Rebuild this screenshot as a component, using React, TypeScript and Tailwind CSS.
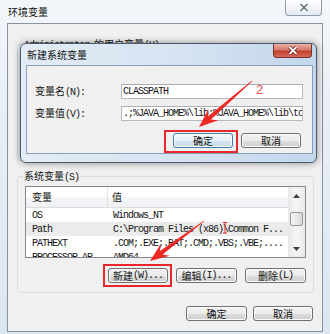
import React from 'react';

const mono = "font-['Liberation_Mono',monospace] tracking-[-1px]";

function M({ children }: { children: React.ReactNode }) {
  return <span className={mono}>{children}</span>;
}

function WinButton({
  children,
  primary = false,
  className = '',
}: {
  children: React.ReactNode;
  primary?: boolean;
  className?: string;
}) {
  return (
    <button
      className={`flex h-[15px] items-center justify-center rounded-[3px] border leading-none shadow-[inset_0_0_0_1px_#fbfbfb] ${
        primary
          ? 'border-[#3c7fb1] bg-[linear-gradient(#f1f7fb_0%,#e6f0f7_50%,#d6e5f0_51%,#c9dbe8_100%)]'
          : 'border-[#707070] bg-[linear-gradient(#f2f2f2_0%,#ebebeb_50%,#dddddd_51%,#cfcfcf_100%)]'
      } ${className}`}
    >
      {children}
    </button>
  );
}

// polygon for the red annotation arrows: thin tail, widening shaft, swept head
function arrow(tx: number, ty: number, px: number, py: number, h = 19, hw = 7.5) {
  const len = Math.hypot(px - tx, py - ty);
  const ux = (px - tx) / len;
  const uy = (py - ty) / len;
  const nx = -uy;
  const ny = ux;
  const bx = px - ux * h;
  const by = py - uy * h;
  const cx = px - ux * (h - 5);
  const cy = py - uy * (h - 5);
  const pts = [
    [tx + nx * 0.4, ty + ny * 0.4],
    [cx + nx * 2.2, cy + ny * 2.2],
    [bx + nx * hw, by + ny * hw],
    [px, py],
    [bx - nx * hw, by - ny * hw],
    [cx - nx * 2.2, cy - ny * 2.2],
    [tx - nx * 0.4, ty - ny * 0.4],
  ];
  return pts.map((p) => p.map((v) => v.toFixed(1)).join(',')).join(' ');
}

const rows = [
  { name: 'OS', value: 'Windows_NT' },
  { name: 'Path', value: 'C:\\Program Files (x86)\\Common F...', active: true },
  { name: 'PATHEXT', value: '.COM;.EXE;.BAT;.CMD;.VBS;.VBE;....' },
  { name: 'PROCESSOR_AR', value: 'AMD64' },
];

export default function App() {
  return (
    <div className="relative h-[334px] w-[330px] overflow-hidden bg-[linear-gradient(180deg,#f4f7fa_0%,#e8eef5_35%,#dce6f0_100%)] font-['Noto_Sans_CJK_SC',sans-serif] text-[10px] leading-[12px] text-[#141414]">
      {/* outer window title bar */}
      <div className="flex h-[23px] items-start justify-between">
        <span className="pl-[8px] pt-[6px]">环境变量</span>
        <div className="mr-[8px] flex h-[16px] w-[37px] items-center justify-center rounded-b-[4px] border border-t-0 border-[#8f9cab] bg-[linear-gradient(#ffffff_0%,#f1f4f8_50%,#e4eaf1_100%)]">
          <svg width="10" height="9" viewBox="0 0 10 9">
            <path d="M1.5 1 L8.5 8 M8.5 1 L1.5 8" stroke="#ffffff" strokeWidth="3.2" />
            <path d="M1.5 1 L8.5 8 M8.5 1 L1.5 8" stroke="#66717e" strokeWidth="1.6" />
          </svg>
        </div>
      </div>

      {/* outer client area */}
      <div className="ml-[7px] flex h-[309px] w-[316px] flex-col border border-[#8693a2] bg-[#f0f0f0]">
        <fieldset className="ml-[9px] mr-[8px] mt-[14px] h-[123px] rounded-[3px] border border-[#d5dfe5]">
          <legend className="ml-[5px] h-[12px] px-[1px] whitespace-nowrap">
            <M>Administrator </M>的用户变量<M>(U)</M>
          </legend>
        </fieldset>

        <fieldset className="ml-[9px] mr-[8px] mt-[9px] h-[123px] rounded-[3px] border border-[#d5dfe5]">
          <legend className="ml-[5px] h-[12px] px-[1px] whitespace-nowrap">
            系统变量<M>(S)</M>
          </legend>
          <div className="px-[7px] pt-[4px]">
            <div className="flex h-[72px] border border-[#828790] bg-white">
              <div className="flex flex-1 flex-col overflow-hidden">
                <div className="flex h-[21px] shrink-0 border-b border-[#dcdcdc] bg-[linear-gradient(#ffffff_0%,#ffffff_50%,#f4f5f7_51%,#eef0f3_100%)]">
                  <div className="flex w-[82px] items-center border-r border-[#e2e2e2] pl-[6px]">变量</div>
                  <div className="flex items-center pl-[4px]">值</div>
                </div>
                {rows.map((r) => (
                  <div
                    key={r.name}
                    className={`flex h-[14px] shrink-0 items-center whitespace-nowrap ${r.active ? 'bg-[#ebebeb]' : ''}`}
                  >
                    <div className="w-[82px] pl-[6px]">
                      <M>{r.name}</M>
                    </div>
                    <div className="pl-[5px]">
                      <M>{r.value}</M>
                    </div>
                  </div>
                ))}
              </div>
              <div className="flex w-[17px] flex-col items-center bg-[linear-gradient(90deg,#e8e8e8,#f4f4f4_40%,#f4f4f4_60%,#e8e8e8)]">
                <div className="flex h-[17px] w-full items-center justify-center">
                  <svg width="7" height="4" viewBox="0 0 7 4">
                    <path d="M0 4 L3.5 0 L7 4 Z" fill="#404040" />
                  </svg>
                </div>
                <div className="mt-[8px] h-[14px] w-[13px] rounded-[2px] border border-[#979797] bg-[linear-gradient(90deg,#f3f3f3,#e8e8e8_50%,#d8d8d8)]" />
                <div className="flex-1" />
                <div className="flex h-[17px] w-full items-center justify-center">
                  <svg width="7" height="4" viewBox="0 0 7 4">
                    <path d="M0 0 L3.5 4 L7 0 Z" fill="#404040" />
                  </svg>
                </div>
              </div>
            </div>
            <div className="mt-[10px] flex justify-end gap-[8px]">
              <div className="relative">
                <WinButton className="w-[60px]">
                  新建<M>(W)...</M>
                </WinButton>
                <span className="absolute -bottom-[4px] -left-[5px] -right-[4px] -top-[4px] border-2 border-[#e8262c]" />
              </div>
              <WinButton className="w-[61px]">
                编辑<M>(I)...</M>
              </WinButton>
              <WinButton className="w-[61px]">
                删除<M>(L)</M>
              </WinButton>
            </div>
          </div>
        </fieldset>

        <div className="mt-[13px] flex justify-end gap-[6px] pr-[9px]">
          <WinButton className="w-[61px]">确定</WinButton>
          <WinButton className="w-[60px]">取消</WinButton>
        </div>
      </div>

      {/* nested dialog: 新建系统变量 */}
      <div className="absolute left-[20px] top-[43px] flex h-[120px] w-[297px] flex-col rounded-[6px] border border-[#4a5a6b] bg-[linear-gradient(90deg,#e3ecf6_0%,#d5e3f1_55%,#c3d6eb_100%)] shadow-[0_0_7px_rgba(0,0,0,0.45)]">
        <div className="flex h-[21px] items-start justify-between">
          <span className="pl-[6px] pt-[5px]">新建系统变量</span>
          <div className="mr-[4px] flex h-[14px] w-[39px] items-center justify-center rounded-b-[4px] border border-t-0 border-[#7b3127] bg-[linear-gradient(#eab0a4_0%,#d77b6d_45%,#c2402f_55%,#d5695a_100%)]">
            <svg width="10" height="9" viewBox="0 0 10 9">
              <path d="M1.5 1 L8.5 8 M8.5 1 L1.5 8" stroke="#5a1a12" strokeWidth="3.4" />
              <path d="M1.5 1 L8.5 8 M8.5 1 L1.5 8" stroke="#ffffff" strokeWidth="1.8" />
            </svg>
          </div>
        </div>
        <div className="ml-[5px] h-[89px] w-[287px] border border-[#8aa0b8] bg-[#f0f0f0]">
          <div className="mt-[18px] flex h-[15px] items-center">
            <span className="w-[94px] pl-[8px] whitespace-nowrap">
              变量名<M>(N):</M>
            </span>
            <div className="flex h-[15px] w-[182px] items-center border border-[#b5b9c1] border-t-[#abadb3] bg-white px-[1px]">
              <M>CLASSPATH</M>
            </div>
          </div>
          <div className="mt-[7px] flex h-[15px] items-center">
            <span className="w-[94px] pl-[8px] whitespace-nowrap">
              变量值<M>(V):</M>
            </span>
            <div className="flex h-[15px] w-[182px] items-center overflow-hidden whitespace-nowrap border border-[#b5b9c1] border-t-[#abadb3] bg-white px-[1px]">
              <M>{'.;%JAVA_HOME%\\lib;%JAVA_HOME%\\lib\\tools.jar'}</M>
            </div>
          </div>
          <div className="mt-[12px] flex justify-end gap-[8px] pr-[11px]">
            <div className="relative">
              <WinButton primary className="w-[60px]">
                确定
              </WinButton>
              <span className="absolute -bottom-[5px] -left-[9px] -right-[5px] -top-[3px] border-2 border-[#e8262c]" />
            </div>
            <WinButton className="w-[60px]">取消</WinButton>
          </div>
        </div>
      </div>

      {/* red annotations */}
      <svg className="pointer-events-none absolute left-0 top-0" width="330" height="334" viewBox="0 0 330 334">
        <polygon points={arrow(252, 81, 199, 127)} fill="#ec2a25" />
        <polygon points={arrow(204, 221, 150, 261)} fill="#ec2a25" />
        <path d="M223 222.5 L227 222.5 M225 222.5 L225 233 M223 233 L227 233" stroke="#ec2a25" strokeWidth="1" />
      </svg>
      <span className="absolute left-[256px] top-[83px] font-['Liberation_Sans',sans-serif] text-[13px] leading-[14px] text-[#f04a4a]">
        2
      </span>
    </div>
  );
}
